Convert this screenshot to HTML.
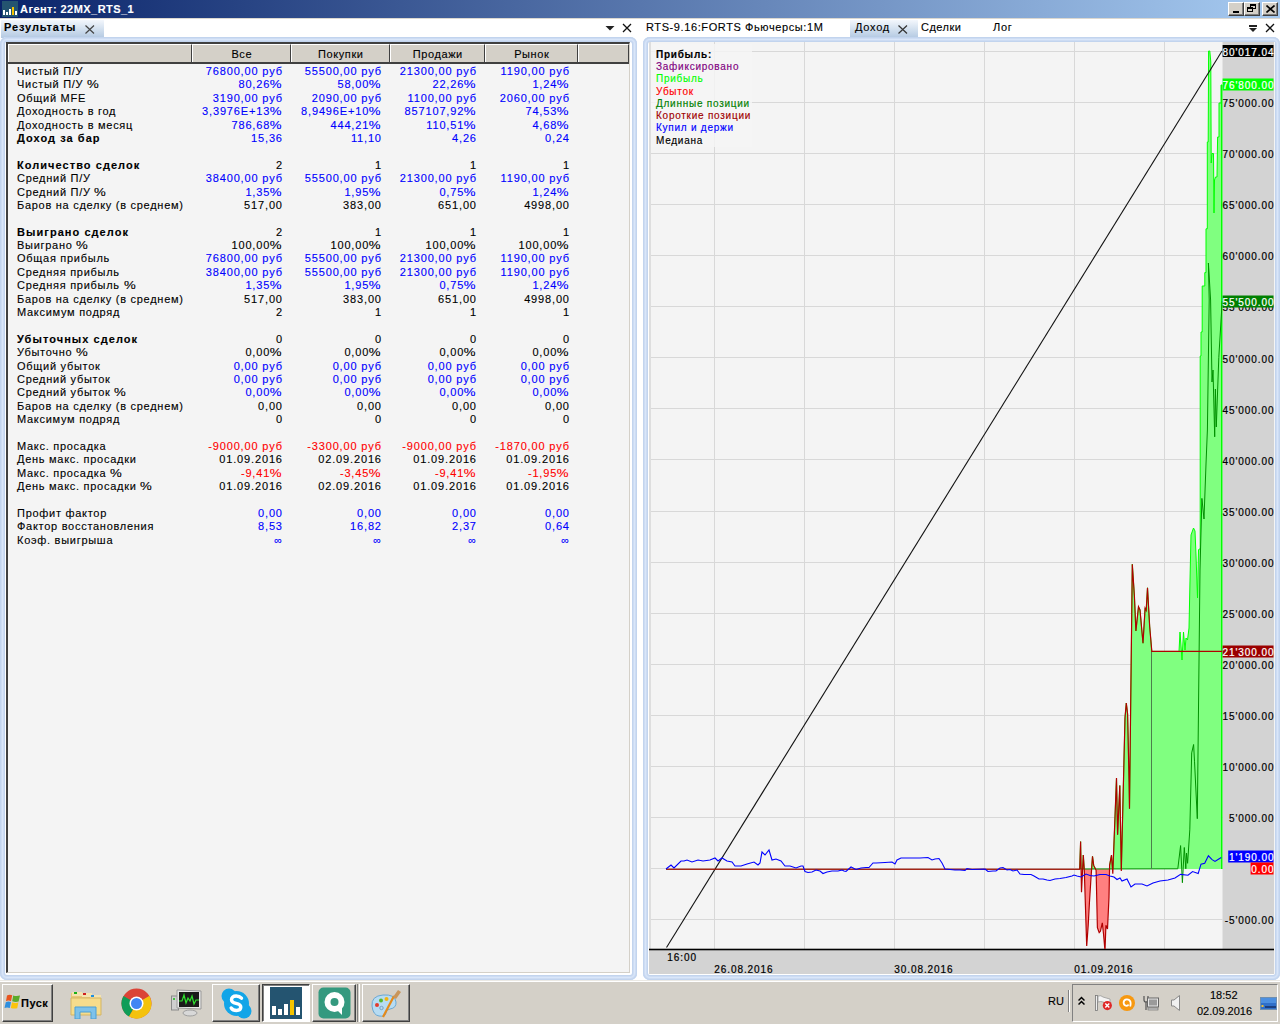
<!DOCTYPE html>
<html><head><meta charset="utf-8">
<style>
*{margin:0;padding:0;box-sizing:border-box}
html,body{width:1280px;height:1024px;overflow:hidden;background:#fff;font-family:"Liberation Sans",sans-serif;font-size:11px;color:#000;position:relative;-webkit-text-stroke:0.12px currentColor}
.a{position:absolute}
#title{left:0;top:0;width:1280px;height:18px;background:linear-gradient(to right,#0a246a 0%,#a6caf0 100%)}
#title .t{position:absolute;left:20px;top:2px;color:#fff;font-weight:bold;font-size:11px;line-height:14px;letter-spacing:0.45px}
.tb{position:absolute;top:2px;width:16px;height:14px;background:#d4d0c8;border-top:1px solid #fff;border-left:1px solid #fff;border-right:1px solid #404040;border-bottom:1px solid #404040;box-shadow:inset -1px -1px 0 #808080}
.tab{position:absolute;top:20px;height:18px;background:linear-gradient(#f3f7fc,#b3c9e2)}
.frame{position:absolute;border-radius:7px;background:#fff;box-shadow:inset 0 0 0 1px #c2d4ee,inset 0 0 0 2px #cddcf3,inset 0 0 0 3px #d9e6f9,inset 0 0 0 4px #cddcf3,inset 0 0 0 5px #c2d4ee}
.rl{position:absolute;left:17px;line-height:13px;white-space:nowrap;letter-spacing:0.72px}
.rl.b{letter-spacing:1.05px}
.rv{position:absolute;line-height:13px;white-space:nowrap;text-align:right;letter-spacing:0.85px;margin-right:-0.85px}
.b{font-weight:bold}
.pc{display:inline-block;margin-left:2px;transform:scaleX(1.2);transform-origin:100% 50%}
.hc{position:absolute;top:44px;height:19px;background:#d4d0c8;border-top:1px solid #fff;border-left:1px solid #fff;border-right:1px solid #404040;text-align:center;line-height:18px;letter-spacing:0.6px;text-indent:0.6px}
.tk{position:absolute;top:984px;height:38px;background:#d4d0c8;border-top:1px solid #fff;border-left:1px solid #fff;border-right:1px solid #404040;border-bottom:1px solid #404040;box-shadow:inset -1px -1px 0 #808080}
</style></head><body>
<div id="title" class="a">
  <svg class="a" style="left:2px;top:1px" width="16" height="16"><rect width="16" height="16" fill="#245470"/><rect x="1" y="9" width="2" height="5" fill="#fff"/><rect x="4" y="11" width="2" height="3" fill="#fff"/><rect x="7" y="8" width="2" height="6" fill="#fff"/><rect x="10" y="6" width="2" height="8" fill="#f5c400"/><rect x="13" y="10" width="2" height="4" fill="#fff"/></svg>
  <div class="t">Агент: 22MX_RTS_1</div>
  <div class="tb" style="left:1228px"><div class="a" style="left:4px;top:8px;width:6px;height:2px;background:#000"></div></div>
  <div class="tb" style="left:1244px"><div class="a" style="left:5px;top:1px;width:6px;height:5px;border:1px solid #000;border-top-width:2px"></div><div class="a" style="left:2px;top:4px;width:6px;height:5px;border:1px solid #000;border-top-width:2px;background:#d4d0c8"></div></div>
  <div class="tb" style="left:1262px"><svg class="a" style="left:3px;top:2px" width="9" height="8"><path d="M0.5 0.5 L8.5 7.5 M8.5 0.5 L0.5 7.5" stroke="#000" stroke-width="1.6"/></svg></div>
</div>
<div class="a" style="left:0;top:18px;width:1280px;height:1px;background:#dcd8d0"></div>
<!-- left panel tab strip -->
<div class="tab" style="left:1px;width:103px"></div>
<div class="a b" style="left:4px;top:21px;font-size:11px;line-height:13px;letter-spacing:0.9px">Результаты</div>
<svg class="a" style="left:85px;top:25px" width="10" height="9"><path d="M0.5 0.5 L9 8.5 M9 0.5 L0.5 8.5" stroke="#444" stroke-width="1.2"/></svg>
<svg class="a" style="left:605px;top:25px" width="10" height="7"><path d="M0.5 1 L9.5 1 L5 5.5 Z" fill="#222"/></svg>
<svg class="a" style="left:622px;top:23px" width="10" height="10"><path d="M1 1 L9 9 M9 1 L1 9" stroke="#111" stroke-width="1.3"/></svg>
<!-- right panel tabs -->
<div class="a" style="left:646px;top:21px;line-height:13px;letter-spacing:0.6px">RTS-9.16:FORTS Фьючерсы:1M</div>
<div class="tab" style="left:850px;width:68px"></div>
<div class="a" style="left:855px;top:21px;line-height:13px;letter-spacing:0.75px">Доход</div>
<svg class="a" style="left:898px;top:25px" width="10" height="9"><path d="M0.5 0.5 L9 8.5 M9 0.5 L0.5 8.5" stroke="#333" stroke-width="1.2"/></svg>
<div class="a" style="left:921px;top:21px;line-height:13px;letter-spacing:0.5px">Сделки</div>
<div class="a" style="left:993px;top:21px;line-height:13px;letter-spacing:0.7px">Лог</div>
<svg class="a" style="left:1248px;top:24px" width="10" height="10"><rect x="1" y="1" width="8" height="2" fill="#222"/><path d="M1 4 L9 4 L5 8 Z" fill="#222"/></svg>
<svg class="a" style="left:1265px;top:23px" width="10" height="10"><path d="M1 1 L9 9 M9 1 L1 9" stroke="#111" stroke-width="1.3"/></svg>

<!-- left frame -->
<div class="frame" style="left:0;top:37px;width:637px;height:943px"></div>
<div class="a" style="left:6px;top:42px;width:624px;height:931px;background:#f4f4f4;border-left:2px solid #404040;border-top:2px solid #404040;border-right:1px solid #d4d0c8;border-bottom:1px solid #d4d0c8"></div>
<div class="hc" style="left:8px;width:184px"></div>
<div class="hc" style="left:192px;width:99px">Все</div>
<div class="hc" style="left:291px;width:99px">Покупки</div>
<div class="hc" style="left:390px;width:95px">Продажи</div>
<div class="hc" style="left:485px;width:93px">Рынок</div>
<div class="hc" style="left:578px;width:51px"></div>
<div class="a" style="left:8px;top:62px;width:621px;height:2px;background:#404040"></div>
<div class="rl" style="top:65.00px">Чистый П/У</div>
<div class="rv" style="top:65.00px;right:998px;color:#0000ff">76800,00 руб</div>
<div class="rv" style="top:65.00px;right:899px;color:#0000ff">55500,00 руб</div>
<div class="rv" style="top:65.00px;right:804px;color:#0000ff">21300,00 руб</div>
<div class="rv" style="top:65.00px;right:711px;color:#0000ff">1190,00 руб</div>
<div class="rl" style="top:78.39px">Чистый П/У <span class="pc">%</span></div>
<div class="rv" style="top:78.39px;right:998px;color:#0000ff">80,26<span class="pc">%</span></div>
<div class="rv" style="top:78.39px;right:899px;color:#0000ff">58,00<span class="pc">%</span></div>
<div class="rv" style="top:78.39px;right:804px;color:#0000ff">22,26<span class="pc">%</span></div>
<div class="rv" style="top:78.39px;right:711px;color:#0000ff">1,24<span class="pc">%</span></div>
<div class="rl" style="top:91.78px">Общий MFE</div>
<div class="rv" style="top:91.78px;right:998px;color:#0000ff">3190,00 руб</div>
<div class="rv" style="top:91.78px;right:899px;color:#0000ff">2090,00 руб</div>
<div class="rv" style="top:91.78px;right:804px;color:#0000ff">1100,00 руб</div>
<div class="rv" style="top:91.78px;right:711px;color:#0000ff">2060,00 руб</div>
<div class="rl" style="top:105.17px">Доходность в год</div>
<div class="rv" style="top:105.17px;right:998px;color:#0000ff">3,3976E+13<span class="pc">%</span></div>
<div class="rv" style="top:105.17px;right:899px;color:#0000ff">8,9496E+10<span class="pc">%</span></div>
<div class="rv" style="top:105.17px;right:804px;color:#0000ff">857107,92<span class="pc">%</span></div>
<div class="rv" style="top:105.17px;right:711px;color:#0000ff">74,53<span class="pc">%</span></div>
<div class="rl" style="top:118.56px">Доходность в месяц</div>
<div class="rv" style="top:118.56px;right:998px;color:#0000ff">786,68<span class="pc">%</span></div>
<div class="rv" style="top:118.56px;right:899px;color:#0000ff">444,21<span class="pc">%</span></div>
<div class="rv" style="top:118.56px;right:804px;color:#0000ff">110,51<span class="pc">%</span></div>
<div class="rv" style="top:118.56px;right:711px;color:#0000ff">4,68<span class="pc">%</span></div>
<div class="rl b" style="top:131.95px">Доход за бар</div>
<div class="rv" style="top:131.95px;right:998px;color:#0000ff">15,36</div>
<div class="rv" style="top:131.95px;right:899px;color:#0000ff">11,10</div>
<div class="rv" style="top:131.95px;right:804px;color:#0000ff">4,26</div>
<div class="rv" style="top:131.95px;right:711px;color:#0000ff">0,24</div>
<div class="rl b" style="top:158.73px">Количество сделок</div>
<div class="rv" style="top:158.73px;right:998px;color:#000000">2</div>
<div class="rv" style="top:158.73px;right:899px;color:#000000">1</div>
<div class="rv" style="top:158.73px;right:804px;color:#000000">1</div>
<div class="rv" style="top:158.73px;right:711px;color:#000000">1</div>
<div class="rl" style="top:172.12px">Средний П/У</div>
<div class="rv" style="top:172.12px;right:998px;color:#0000ff">38400,00 руб</div>
<div class="rv" style="top:172.12px;right:899px;color:#0000ff">55500,00 руб</div>
<div class="rv" style="top:172.12px;right:804px;color:#0000ff">21300,00 руб</div>
<div class="rv" style="top:172.12px;right:711px;color:#0000ff">1190,00 руб</div>
<div class="rl" style="top:185.51px">Средний П/У <span class="pc">%</span></div>
<div class="rv" style="top:185.51px;right:998px;color:#0000ff">1,35<span class="pc">%</span></div>
<div class="rv" style="top:185.51px;right:899px;color:#0000ff">1,95<span class="pc">%</span></div>
<div class="rv" style="top:185.51px;right:804px;color:#0000ff">0,75<span class="pc">%</span></div>
<div class="rv" style="top:185.51px;right:711px;color:#0000ff">1,24<span class="pc">%</span></div>
<div class="rl" style="top:198.90px">Баров на сделку (в среднем)</div>
<div class="rv" style="top:198.90px;right:998px;color:#000000">517,00</div>
<div class="rv" style="top:198.90px;right:899px;color:#000000">383,00</div>
<div class="rv" style="top:198.90px;right:804px;color:#000000">651,00</div>
<div class="rv" style="top:198.90px;right:711px;color:#000000">4998,00</div>
<div class="rl b" style="top:225.68px">Выиграно сделок</div>
<div class="rv" style="top:225.68px;right:998px;color:#000000">2</div>
<div class="rv" style="top:225.68px;right:899px;color:#000000">1</div>
<div class="rv" style="top:225.68px;right:804px;color:#000000">1</div>
<div class="rv" style="top:225.68px;right:711px;color:#000000">1</div>
<div class="rl" style="top:239.07px">Выиграно <span class="pc">%</span></div>
<div class="rv" style="top:239.07px;right:998px;color:#000000">100,00<span class="pc">%</span></div>
<div class="rv" style="top:239.07px;right:899px;color:#000000">100,00<span class="pc">%</span></div>
<div class="rv" style="top:239.07px;right:804px;color:#000000">100,00<span class="pc">%</span></div>
<div class="rv" style="top:239.07px;right:711px;color:#000000">100,00<span class="pc">%</span></div>
<div class="rl" style="top:252.46px">Общая прибыль</div>
<div class="rv" style="top:252.46px;right:998px;color:#0000ff">76800,00 руб</div>
<div class="rv" style="top:252.46px;right:899px;color:#0000ff">55500,00 руб</div>
<div class="rv" style="top:252.46px;right:804px;color:#0000ff">21300,00 руб</div>
<div class="rv" style="top:252.46px;right:711px;color:#0000ff">1190,00 руб</div>
<div class="rl" style="top:265.85px">Средняя прибыль</div>
<div class="rv" style="top:265.85px;right:998px;color:#0000ff">38400,00 руб</div>
<div class="rv" style="top:265.85px;right:899px;color:#0000ff">55500,00 руб</div>
<div class="rv" style="top:265.85px;right:804px;color:#0000ff">21300,00 руб</div>
<div class="rv" style="top:265.85px;right:711px;color:#0000ff">1190,00 руб</div>
<div class="rl" style="top:279.24px">Средняя прибыль <span class="pc">%</span></div>
<div class="rv" style="top:279.24px;right:998px;color:#0000ff">1,35<span class="pc">%</span></div>
<div class="rv" style="top:279.24px;right:899px;color:#0000ff">1,95<span class="pc">%</span></div>
<div class="rv" style="top:279.24px;right:804px;color:#0000ff">0,75<span class="pc">%</span></div>
<div class="rv" style="top:279.24px;right:711px;color:#0000ff">1,24<span class="pc">%</span></div>
<div class="rl" style="top:292.63px">Баров на сделку (в среднем)</div>
<div class="rv" style="top:292.63px;right:998px;color:#000000">517,00</div>
<div class="rv" style="top:292.63px;right:899px;color:#000000">383,00</div>
<div class="rv" style="top:292.63px;right:804px;color:#000000">651,00</div>
<div class="rv" style="top:292.63px;right:711px;color:#000000">4998,00</div>
<div class="rl" style="top:306.02px">Максимум подряд</div>
<div class="rv" style="top:306.02px;right:998px;color:#000000">2</div>
<div class="rv" style="top:306.02px;right:899px;color:#000000">1</div>
<div class="rv" style="top:306.02px;right:804px;color:#000000">1</div>
<div class="rv" style="top:306.02px;right:711px;color:#000000">1</div>
<div class="rl b" style="top:332.80px">Убыточных сделок</div>
<div class="rv" style="top:332.80px;right:998px;color:#000000">0</div>
<div class="rv" style="top:332.80px;right:899px;color:#000000">0</div>
<div class="rv" style="top:332.80px;right:804px;color:#000000">0</div>
<div class="rv" style="top:332.80px;right:711px;color:#000000">0</div>
<div class="rl" style="top:346.19px">Убыточно <span class="pc">%</span></div>
<div class="rv" style="top:346.19px;right:998px;color:#000000">0,00<span class="pc">%</span></div>
<div class="rv" style="top:346.19px;right:899px;color:#000000">0,00<span class="pc">%</span></div>
<div class="rv" style="top:346.19px;right:804px;color:#000000">0,00<span class="pc">%</span></div>
<div class="rv" style="top:346.19px;right:711px;color:#000000">0,00<span class="pc">%</span></div>
<div class="rl" style="top:359.58px">Общий убыток</div>
<div class="rv" style="top:359.58px;right:998px;color:#0000ff">0,00 руб</div>
<div class="rv" style="top:359.58px;right:899px;color:#0000ff">0,00 руб</div>
<div class="rv" style="top:359.58px;right:804px;color:#0000ff">0,00 руб</div>
<div class="rv" style="top:359.58px;right:711px;color:#0000ff">0,00 руб</div>
<div class="rl" style="top:372.97px">Средний убыток</div>
<div class="rv" style="top:372.97px;right:998px;color:#0000ff">0,00 руб</div>
<div class="rv" style="top:372.97px;right:899px;color:#0000ff">0,00 руб</div>
<div class="rv" style="top:372.97px;right:804px;color:#0000ff">0,00 руб</div>
<div class="rv" style="top:372.97px;right:711px;color:#0000ff">0,00 руб</div>
<div class="rl" style="top:386.36px">Средний убыток <span class="pc">%</span></div>
<div class="rv" style="top:386.36px;right:998px;color:#0000ff">0,00<span class="pc">%</span></div>
<div class="rv" style="top:386.36px;right:899px;color:#0000ff">0,00<span class="pc">%</span></div>
<div class="rv" style="top:386.36px;right:804px;color:#0000ff">0,00<span class="pc">%</span></div>
<div class="rv" style="top:386.36px;right:711px;color:#0000ff">0,00<span class="pc">%</span></div>
<div class="rl" style="top:399.75px">Баров на сделку (в среднем)</div>
<div class="rv" style="top:399.75px;right:998px;color:#000000">0,00</div>
<div class="rv" style="top:399.75px;right:899px;color:#000000">0,00</div>
<div class="rv" style="top:399.75px;right:804px;color:#000000">0,00</div>
<div class="rv" style="top:399.75px;right:711px;color:#000000">0,00</div>
<div class="rl" style="top:413.14px">Максимум подряд</div>
<div class="rv" style="top:413.14px;right:998px;color:#000000">0</div>
<div class="rv" style="top:413.14px;right:899px;color:#000000">0</div>
<div class="rv" style="top:413.14px;right:804px;color:#000000">0</div>
<div class="rv" style="top:413.14px;right:711px;color:#000000">0</div>
<div class="rl" style="top:439.92px">Макс. просадка</div>
<div class="rv" style="top:439.92px;right:998px;color:#ff0000">-9000,00 руб</div>
<div class="rv" style="top:439.92px;right:899px;color:#ff0000">-3300,00 руб</div>
<div class="rv" style="top:439.92px;right:804px;color:#ff0000">-9000,00 руб</div>
<div class="rv" style="top:439.92px;right:711px;color:#ff0000">-1870,00 руб</div>
<div class="rl" style="top:453.31px">День макс. просадки</div>
<div class="rv" style="top:453.31px;right:998px;color:#000000">01.09.2016</div>
<div class="rv" style="top:453.31px;right:899px;color:#000000">02.09.2016</div>
<div class="rv" style="top:453.31px;right:804px;color:#000000">01.09.2016</div>
<div class="rv" style="top:453.31px;right:711px;color:#000000">01.09.2016</div>
<div class="rl" style="top:466.70px">Макс. просадка <span class="pc">%</span></div>
<div class="rv" style="top:466.70px;right:998px;color:#ff0000">-9,41<span class="pc">%</span></div>
<div class="rv" style="top:466.70px;right:899px;color:#ff0000">-3,45<span class="pc">%</span></div>
<div class="rv" style="top:466.70px;right:804px;color:#ff0000">-9,41<span class="pc">%</span></div>
<div class="rv" style="top:466.70px;right:711px;color:#ff0000">-1,95<span class="pc">%</span></div>
<div class="rl" style="top:480.09px">День макс. просадки <span class="pc">%</span></div>
<div class="rv" style="top:480.09px;right:998px;color:#000000">01.09.2016</div>
<div class="rv" style="top:480.09px;right:899px;color:#000000">02.09.2016</div>
<div class="rv" style="top:480.09px;right:804px;color:#000000">01.09.2016</div>
<div class="rv" style="top:480.09px;right:711px;color:#000000">01.09.2016</div>
<div class="rl" style="top:506.87px">Профит фактор</div>
<div class="rv" style="top:506.87px;right:998px;color:#0000ff">0,00</div>
<div class="rv" style="top:506.87px;right:899px;color:#0000ff">0,00</div>
<div class="rv" style="top:506.87px;right:804px;color:#0000ff">0,00</div>
<div class="rv" style="top:506.87px;right:711px;color:#0000ff">0,00</div>
<div class="rl" style="top:520.26px">Фактор восстановления</div>
<div class="rv" style="top:520.26px;right:998px;color:#0000ff">8,53</div>
<div class="rv" style="top:520.26px;right:899px;color:#0000ff">16,82</div>
<div class="rv" style="top:520.26px;right:804px;color:#0000ff">2,37</div>
<div class="rv" style="top:520.26px;right:711px;color:#0000ff">0,64</div>
<div class="rl" style="top:533.65px">Коэф. выигрыша</div>
<div class="rv" style="top:533.65px;right:998px;color:#0000ff">∞</div>
<div class="rv" style="top:533.65px;right:899px;color:#0000ff">∞</div>
<div class="rv" style="top:533.65px;right:804px;color:#0000ff">∞</div>
<div class="rv" style="top:533.65px;right:711px;color:#0000ff">∞</div>

<!-- right frame -->
<div class="frame" style="left:643px;top:37px;width:637px;height:943px"></div>
<svg class="a" style="left:649px;top:42px" width="626" height="932" viewBox="649 42 626 932">
<defs><clipPath id="plot"><rect x="649" y="42" width="573.5" height="907"/></clipPath><clipPath id="below"><rect x="649" y="869" width="573.5" height="80"/></clipPath><clipPath id="above"><rect x="649" y="42" width="573.5" height="827"/></clipPath></defs>
<rect x="649" y="42" width="626" height="932" fill="#f4f4f4"/>
<rect x="649" y="42" width="2" height="907" fill="#dedede"/>
<rect x="714" y="42" width="1" height="907" fill="#d8d8d8"/>
<rect x="804" y="42" width="1" height="907" fill="#d8d8d8"/>
<rect x="894" y="42" width="1" height="907" fill="#d8d8d8"/>
<rect x="984" y="42" width="1" height="907" fill="#d8d8d8"/>
<rect x="1074" y="42" width="1" height="907" fill="#d8d8d8"/>
<rect x="1164" y="42" width="1" height="907" fill="#d8d8d8"/>
<rect x="651" y="919" width="571.5" height="1" fill="#d8d8d8"/>
<rect x="651" y="868" width="571.5" height="1" fill="#d8d8d8"/>
<rect x="651" y="817" width="571.5" height="1" fill="#d8d8d8"/>
<rect x="651" y="766" width="571.5" height="1" fill="#d8d8d8"/>
<rect x="651" y="715" width="571.5" height="1" fill="#d8d8d8"/>
<rect x="651" y="664" width="571.5" height="1" fill="#d8d8d8"/>
<rect x="651" y="613" width="571.5" height="1" fill="#d8d8d8"/>
<rect x="651" y="562" width="571.5" height="1" fill="#d8d8d8"/>
<rect x="651" y="511" width="571.5" height="1" fill="#d8d8d8"/>
<rect x="651" y="459" width="571.5" height="1" fill="#d8d8d8"/>
<rect x="651" y="408" width="571.5" height="1" fill="#d8d8d8"/>
<rect x="651" y="357" width="571.5" height="1" fill="#d8d8d8"/>
<rect x="651" y="306" width="571.5" height="1" fill="#d8d8d8"/>
<rect x="651" y="255" width="571.5" height="1" fill="#d8d8d8"/>
<rect x="651" y="204" width="571.5" height="1" fill="#d8d8d8"/>
<rect x="651" y="153" width="571.5" height="1" fill="#d8d8d8"/>
<rect x="651" y="102" width="571.5" height="1" fill="#d8d8d8"/>
<rect x="651" y="51" width="571.5" height="1" fill="#d8d8d8"/>
<rect x="1222.5" y="42" width="51.5" height="907" fill="#d3d3d3"/>
<rect x="649" y="949" width="625" height="25" fill="#d3d3d3"/>
<rect x="649" y="948.7" width="625" height="1.6" fill="#000"/>
<g clip-path="url(#plot)">
<polygon clip-path="url(#below)" points="1079.7,869 1080.6,841.6 1081.5,892.3 1083.3,855 1084.3,870.3 1086.7,946 1088.2,925.2 1089.4,903.3 1090.7,882.5 1092.5,856.3 1093.7,865.4 1095,868 1096.1,870.3 1097.4,927.7 1099.2,932.6 1100.4,931.3 1102.3,922.8 1103.5,933.8 1105,950.9 1105.9,925.2 1107.5,928.9 1109,897.2 1109.6,865.4 1111.5,855 1112.8,873.7 1116.5,778 1117.6,834.7 1119.8,785.5 1121.3,871 1125,717.8 1126.3,703 1127.6,714 1129.1,782.8 1129.5,808.7 1132.3,564.2 1134.4,596 1135.9,630.9 1138.5,606.8 1140,610 1143,643.2 1145.1,608.3 1146.2,610.4 1147.5,587.8 1149.7,626.8 1151.8,651.4 1222,651.4 1222,869 1079.5,869" fill="#ff8080"/>
<polygon clip-path="url(#above)" points="1079.7,869 1080.6,841.6 1081.5,892.3 1083.3,855 1084.3,870.3 1086.7,946 1088.2,925.2 1089.4,903.3 1090.7,882.5 1092.5,856.3 1093.7,865.4 1095,868 1096.1,870.3 1097.4,927.7 1099.2,932.6 1100.4,931.3 1102.3,922.8 1103.5,933.8 1105,950.9 1105.9,925.2 1107.5,928.9 1109,897.2 1109.6,865.4 1111.5,855 1112.8,873.7 1116.5,778 1117.6,834.7 1119.8,785.5 1121.3,871 1125,717.8 1126.3,703 1127.6,714 1129.1,782.8 1129.5,808.7 1132.3,564.2 1134.4,596 1135.9,630.9 1138.5,606.8 1140,610 1143,643.2 1145.1,608.3 1146.2,610.4 1147.5,587.8 1149.7,626.8 1151.8,651.4 1179,651.4 1180,632 1182,660 1183.5,632 1185,650 1186,638 1187.5,640 1189,628 1190,580 1191,535 1193.5,528 1195,531 1196,555 1197.5,598 1198.5,550 1199.2,549 1200.2,549 1200.2,356 1201,356 1201,332 1202.2,332 1202.2,286 1204.8,286 1204.8,272.6 1206,272.6 1206,228.8 1207.3,228.8 1207.3,142 1208.2,142 1208.6,51 1209.8,51 1210.8,62 1211.2,163 1212,153.5 1213.5,153.5 1214,213 1214.5,180 1215.5,177 1217,177 1217.6,137 1219,137 1219,103 1221,103 1221,85 1222,85 1222,869 1079.5,869" fill="#80ff80"/>
<polyline clip-path="url(#above)" points="1079.7,869 1080.6,841.6 1081.5,892.3 1083.3,855 1084.3,870.3 1086.7,946 1088.2,925.2 1089.4,903.3 1090.7,882.5 1092.5,856.3 1093.7,865.4 1095,868 1096.1,870.3 1097.4,927.7 1099.2,932.6 1100.4,931.3 1102.3,922.8 1103.5,933.8 1105,950.9 1105.9,925.2 1107.5,928.9 1109,897.2 1109.6,865.4 1111.5,855 1112.8,873.7 1116.5,778 1117.6,834.7 1119.8,785.5 1121.3,871 1125,717.8 1126.3,703 1127.6,714 1129.1,782.8 1129.5,808.7 1132.3,564.2 1134.4,596 1135.9,630.9 1138.5,606.8 1140,610 1143,643.2 1145.1,608.3 1146.2,610.4 1147.5,587.8 1149.7,626.8 1151.8,651.4 1179,651.4 1180,632 1182,660 1183.5,632 1185,650 1186,638 1187.5,640 1189,628 1190,580 1191,535 1193.5,528 1195,531 1196,555 1197.5,598 1198.5,550 1199.2,549 1200.2,549 1200.2,356 1201,356 1201,332 1202.2,332 1202.2,286 1204.8,286 1204.8,272.6 1206,272.6 1206,228.8 1207.3,228.8 1207.3,142 1208.2,142 1208.6,51 1209.8,51 1210.8,62 1211.2,163 1212,153.5 1213.5,153.5 1214,213 1214.5,180 1215.5,177 1217,177 1217.6,137 1219,137 1219,103 1221,103 1221,85 1222,85" fill="none" stroke="#00ff00" stroke-width="1"/>
<rect x="1221" y="85" width="2" height="784" fill="#00ff00"/>
<line x1="666.5" y1="947.5" x2="1222" y2="51" stroke="#111" stroke-width="1.1"/>
<polyline points="1080,869 1177.8,868.8 1180.6,845.6 1182.4,882.7 1184.3,847.5 1185.8,868.8 1186.5,853 1187.6,863.3 1189.8,829.9 1191.7,752.9 1193.6,744.5 1194.5,761.2 1197.3,818.7 1200,570 1201.9,498.4 1204,519 1206,464 1207.4,430 1209.2,300 1208.4,263 1210.6,300 1212,382 1213,370 1214.7,436.8 1215.4,389 1216.3,427 1218.8,357.5 1222.2,301" fill="none" stroke="#009000" stroke-width="1"/>
<rect x="1151" y="651" width="1" height="218" fill="#4c7f4c"/>
<rect x="666" y="868.6" width="414" height="1.3" fill="#9b1000"/>
<polyline points="1079.7,869 1080.6,841.6 1081.5,892.3 1083.3,855 1084.3,870.3 1086.7,946 1088.2,925.2 1089.4,903.3 1090.7,882.5 1092.5,856.3 1093.7,865.4 1095,868 1096.1,870.3 1097.4,927.7 1099.2,932.6 1100.4,931.3 1102.3,922.8 1103.5,933.8 1105,950.9 1105.9,925.2 1107.5,928.9 1109,897.2 1109.6,865.4 1111.5,855 1112.8,873.7 1116.5,778 1117.6,834.7 1119.8,785.5 1121.3,871 1125,717.8 1126.3,703 1127.6,714 1129.1,782.8 1129.5,808.7 1132.3,564.2 1134.4,596 1135.9,630.9 1138.5,606.8 1140,610 1143,643.2 1145.1,608.3 1146.2,610.4 1147.5,587.8 1149.7,626.8 1151.8,651.4 1222,651.4" fill="none" stroke="#b00000" stroke-width="1.2"/>
<polyline points="666,869 671,865 674,868 681,861 684,861 687,860 692,862 698,860 703,861 710,860 715,858 718,861 722,858 727,861 732,862 735,866 741,866 747,864 754,862 758,865 760,863 762,852 765,855 769,850 772,860 776,859 781,861 785,866 790,866 796,868 801,866 803,866 805,871.5 808,872.5 812,872 816,870 820,871 823,873.5 827,872 832,871 838,871 842,870 844,871 846,871.5 851,867 856,869.5 861,868 866,867.5 869,867.5 873,863 876,863 885,862.5 892,862 895,864 897,860 901,858 908,858 915,858 920,858 928,857.5 932,860 935,859 939,858.5 942,863 945,869 950,869.5 955,870 960,870 965,870.5 967,868.5 972,869.5 985,869 988,871.5 993,871 996,871 1000,868 1003,867.5 1007,870 1010,869.5 1013,871 1017,870 1020,874 1024,874.5 1031,874.5 1034,876 1039,879 1043,879 1047,880 1050,880.5 1055,879 1060,878.5 1066,877.5 1072,876 1074,875 1077,876 1081,877 1086,874 1090,875.5 1094,876 1100,874.5 1106,874.5 1110,876 1114,877 1117,879.5 1120,878 1122,881 1127,879 1131,887 1135,884 1142,884 1147,886 1153,883 1160,881 1168,880 1175,878 1180.6,874.4 1188,875.3 1192.6,871.6 1198.2,873.5 1201,864.2 1204.7,863.3 1208.4,855.8 1212.1,859.6 1215,861.4 1218,859.5 1221.3,857.5" fill="none" stroke="#0000ff" stroke-width="1.1"/>
</g>
<text x="1274.6" y="924.3" text-anchor="end" style="font-family:Liberation Sans;font-size:10px;letter-spacing:0.95px" fill="#000" stroke="#000" stroke-width="0.2">-5'000.00</text>
<text x="1274.6" y="873.2" text-anchor="end" style="font-family:Liberation Sans;font-size:10px;letter-spacing:0.95px" fill="#000" stroke="#000" stroke-width="0.2">0.00</text>
<text x="1274.6" y="822.1" text-anchor="end" style="font-family:Liberation Sans;font-size:10px;letter-spacing:0.95px" fill="#000" stroke="#000" stroke-width="0.2">5'000.00</text>
<text x="1274.6" y="771.1" text-anchor="end" style="font-family:Liberation Sans;font-size:10px;letter-spacing:0.95px" fill="#000" stroke="#000" stroke-width="0.2">10'000.00</text>
<text x="1274.6" y="720.0" text-anchor="end" style="font-family:Liberation Sans;font-size:10px;letter-spacing:0.95px" fill="#000" stroke="#000" stroke-width="0.2">15'000.00</text>
<text x="1274.6" y="668.9" text-anchor="end" style="font-family:Liberation Sans;font-size:10px;letter-spacing:0.95px" fill="#000" stroke="#000" stroke-width="0.2">20'000.00</text>
<text x="1274.6" y="617.9" text-anchor="end" style="font-family:Liberation Sans;font-size:10px;letter-spacing:0.95px" fill="#000" stroke="#000" stroke-width="0.2">25'000.00</text>
<text x="1274.6" y="566.8" text-anchor="end" style="font-family:Liberation Sans;font-size:10px;letter-spacing:0.95px" fill="#000" stroke="#000" stroke-width="0.2">30'000.00</text>
<text x="1274.6" y="515.7" text-anchor="end" style="font-family:Liberation Sans;font-size:10px;letter-spacing:0.95px" fill="#000" stroke="#000" stroke-width="0.2">35'000.00</text>
<text x="1274.6" y="464.6" text-anchor="end" style="font-family:Liberation Sans;font-size:10px;letter-spacing:0.95px" fill="#000" stroke="#000" stroke-width="0.2">40'000.00</text>
<text x="1274.6" y="413.6" text-anchor="end" style="font-family:Liberation Sans;font-size:10px;letter-spacing:0.95px" fill="#000" stroke="#000" stroke-width="0.2">45'000.00</text>
<text x="1274.6" y="362.5" text-anchor="end" style="font-family:Liberation Sans;font-size:10px;letter-spacing:0.95px" fill="#000" stroke="#000" stroke-width="0.2">50'000.00</text>
<text x="1274.6" y="311.4" text-anchor="end" style="font-family:Liberation Sans;font-size:10px;letter-spacing:0.95px" fill="#000" stroke="#000" stroke-width="0.2">55'000.00</text>
<text x="1274.6" y="260.4" text-anchor="end" style="font-family:Liberation Sans;font-size:10px;letter-spacing:0.95px" fill="#000" stroke="#000" stroke-width="0.2">60'000.00</text>
<text x="1274.6" y="209.3" text-anchor="end" style="font-family:Liberation Sans;font-size:10px;letter-spacing:0.95px" fill="#000" stroke="#000" stroke-width="0.2">65'000.00</text>
<text x="1274.6" y="158.2" text-anchor="end" style="font-family:Liberation Sans;font-size:10px;letter-spacing:0.95px" fill="#000" stroke="#000" stroke-width="0.2">70'000.00</text>
<text x="1274.6" y="107.2" text-anchor="end" style="font-family:Liberation Sans;font-size:10px;letter-spacing:0.95px" fill="#000" stroke="#000" stroke-width="0.2">75'000.00</text>
<rect x="1222.6" y="45.0" width="50.9" height="12" fill="#000000"/>
<text x="1274.6" y="55.7" text-anchor="end" style="font-family:Liberation Sans;font-size:10px;letter-spacing:0.95px" fill="#fff" stroke="#fff" stroke-width="0.2">80'017.04</text>
<rect x="1222.6" y="78.5" width="50.9" height="12" fill="#00ff00"/>
<text x="1274.6" y="89.2" text-anchor="end" style="font-family:Liberation Sans;font-size:10px;letter-spacing:0.95px" fill="#fff" stroke="#fff" stroke-width="0.2">76'800.00</text>
<rect x="1222.6" y="295.5" width="50.9" height="12" fill="#008000"/>
<text x="1274.6" y="306.2" text-anchor="end" style="font-family:Liberation Sans;font-size:10px;letter-spacing:0.95px" fill="#fff" stroke="#fff" stroke-width="0.2">55'500.00</text>
<rect x="1222.6" y="645.5" width="50.9" height="12" fill="#9b0000"/>
<text x="1274.6" y="656.2" text-anchor="end" style="font-family:Liberation Sans;font-size:10px;letter-spacing:0.95px" fill="#fff" stroke="#fff" stroke-width="0.2">21'300.00</text>
<rect x="1228.2" y="850.5" width="45.3" height="12" fill="#0000ff"/>
<text x="1274.6" y="861.2" text-anchor="end" style="font-family:Liberation Sans;font-size:10px;letter-spacing:0.95px" fill="#fff" stroke="#fff" stroke-width="0.2">1'190.00</text>
<rect x="1250.6" y="862.5" width="22.9" height="12" fill="#ff0000"/>
<text x="1274.6" y="873.2" text-anchor="end" style="font-family:Liberation Sans;font-size:10px;letter-spacing:0.95px" fill="#fff" stroke="#fff" stroke-width="0.2">0.00</text>
<text x="667.3" y="960.8" style="font-family:Liberation Sans;font-size:10px;letter-spacing:0.92px" fill="#000" stroke="#000" stroke-width="0.2">16:00</text>
<text x="714.3" y="972.8" style="font-family:Liberation Sans;font-size:10px;letter-spacing:0.92px" fill="#000" stroke="#000" stroke-width="0.2">26.08.2016</text>
<text x="894.3" y="972.8" style="font-family:Liberation Sans;font-size:10px;letter-spacing:0.92px" fill="#000" stroke="#000" stroke-width="0.2">30.08.2016</text>
<text x="1074.3" y="972.8" style="font-family:Liberation Sans;font-size:10px;letter-spacing:0.92px" fill="#000" stroke="#000" stroke-width="0.2">01.09.2016</text>
<rect x="651" y="44" width="101" height="103" fill="#f4f4f4" fill-opacity="0.85"/>
<text x="656" y="57.6" style="font-family:Liberation Sans;font-size:10px;letter-spacing:0.75px;font-weight:bold" fill="#000" stroke="#000" stroke-width="0.15">Прибыль:</text>
<text x="656" y="69.9" style="font-family:Liberation Sans;font-size:10px;letter-spacing:0.75px" fill="#800080" stroke="#800080" stroke-width="0.15">Зафиксировано</text>
<text x="656" y="82.2" style="font-family:Liberation Sans;font-size:10px;letter-spacing:0.75px" fill="#00ff00" stroke="#00ff00" stroke-width="0.15">Прибыль</text>
<text x="656" y="94.5" style="font-family:Liberation Sans;font-size:10px;letter-spacing:0.75px" fill="#ff0000" stroke="#ff0000" stroke-width="0.15">Убыток</text>
<text x="656" y="106.8" style="font-family:Liberation Sans;font-size:10px;letter-spacing:0.75px" fill="#008000" stroke="#008000" stroke-width="0.15">Длинные позиции</text>
<text x="656" y="119.1" style="font-family:Liberation Sans;font-size:10px;letter-spacing:0.75px" fill="#a00000" stroke="#a00000" stroke-width="0.15">Короткие позиции</text>
<text x="656" y="131.4" style="font-family:Liberation Sans;font-size:10px;letter-spacing:0.75px" fill="#0000ff" stroke="#0000ff" stroke-width="0.15">Купил и держи</text>
<text x="656" y="143.7" style="font-family:Liberation Sans;font-size:10px;letter-spacing:0.75px" fill="#000" stroke="#000" stroke-width="0.15">Медиана</text>
</svg>

<!-- taskbar -->
<div class="a" style="left:0;top:980px;width:1280px;height:44px;background:#d4d0c8"></div>
<div class="a" style="left:0;top:980px;width:1280px;height:1px;background:#ebe9e4"></div>
<div class="a" style="left:0;top:981px;width:1280px;height:1px;background:#fff"></div>
<div class="tk" style="left:2px;width:51px"></div>
<svg class="a" style="left:4px;top:994px" width="17" height="15" viewBox="0 0 17 15">
<path d="M3 1.5 Q5.5 0 8.2 1.2 L7 7.2 Q4.5 6 2 7.2 Z" fill="#e8541e"/>
<path d="M9.2 1.4 Q12 2.6 16 1.6 L14.6 7.6 Q11.5 8.4 8.2 7.3 Z" fill="#5cab2a"/>
<path d="M1.8 8.2 Q4.5 7 7 8.2 L5.8 14 Q3 12.8 0.5 14 Z" fill="#2f8fde"/>
<path d="M8 8.3 Q11.2 9.4 14.4 8.6 L13.2 14.3 Q10 15 6.8 14 Z" fill="#fcc40c"/>
</svg>
<div class="a b" style="left:21px;top:997px;font-size:11px;line-height:12px;letter-spacing:0.5px">Пуск</div>
<svg class="a" style="left:70px;top:990px" width="32" height="29" viewBox="0 0 32 29">
<path d="M1 3 L1 25 L31 25 L31 6 L17 6 L15 3 Z" fill="#e9c77a"/>
<rect x="2" y="2" width="10" height="4" fill="#f4e3b0"/><rect x="4" y="2" width="3" height="2" fill="#18b018"/>
<rect x="12" y="3" width="10" height="4" fill="#f4e3b0"/><rect x="13" y="3" width="3" height="2" fill="#d02020"/>
<rect x="20" y="5" width="11" height="4" fill="#f4e3b0"/><rect x="21" y="5" width="3" height="2" fill="#2090e0"/>
<path d="M1 8 L31 8 L31 25 L1 25 Z" fill="#f6dc8c" stroke="#d3b565" stroke-width="1"/>
<path d="M5 17 L26 17 L26 29 L21 29 L21 22 L10 22 L10 29 L5 29 Z" fill="#7ec2ea" stroke="#4a9fd6" stroke-width="1"/>
</svg>
<svg class="a" style="left:121px;top:988px" width="31" height="31" viewBox="0 0 31 31">
<circle cx="15.5" cy="15.5" r="15" fill="#db4437"/>
<path d="M15.5 15.5 L2.5 8 A15 15 0 0 0 8 28.5 Z" fill="#0f9d58"/>
<path d="M15.5 15.5 L8 28.5 A15 15 0 0 0 30.5 15.5 L28.5 8 Z" fill="#f4c20d"/>
<path d="M15.5 15.5 L28.5 8 L30.5 15.5 Z" fill="#f4c20d"/>
<circle cx="15.5" cy="15.5" r="7" fill="#fff"/>
<circle cx="15.5" cy="15.5" r="5.5" fill="#4285f4"/>
</svg>
<svg class="a" style="left:171px;top:989px" width="31" height="28" viewBox="0 0 31 28">
<rect x="0.5" y="7" width="7" height="14" fill="#cfcfcf" stroke="#8a8a8a"/>
<rect x="2" y="9" width="2" height="2" fill="#40c040"/>
<path d="M6 1 L30 2 L30 20 L6 19 Z" fill="#e8e8e8" stroke="#9a9a9a"/>
<rect x="8" y="3" width="20" height="15" fill="#1a1a1a"/>
<path d="M8 12 L11 12 L13 6 L15 14 L17 9 L19 12 L21 7 L23 15 L25 11 L28 11" fill="none" stroke="#2ee02e" stroke-width="1.2"/>
<ellipse cx="19" cy="24" rx="7" ry="3" fill="#d8d8d8" stroke="#a0a0a0"/>
</svg>
<div class="tk" style="left:212px;width:48px"></div>
<svg class="a" style="left:221px;top:988px" width="31" height="31" viewBox="0 0 31 31">
<circle cx="8" cy="8" r="7.5" fill="#12a5e8"/><circle cx="23" cy="23" r="7.5" fill="#12a5e8"/>
<circle cx="15.5" cy="15.5" r="12.5" fill="#12a5e8"/>
<path d="M20.5 10.2 Q18.5 8 15.2 8 Q10.5 8 10.5 11.8 Q10.5 14.5 15 15.4 Q19.8 16.4 19.8 19 Q19.8 22.5 15.5 22.5 Q11.8 22.5 10.2 20" fill="none" stroke="#fff" stroke-width="3.4" stroke-linecap="round"/>
</svg>
<div class="a" style="left:262px;top:984px;width:48px;height:38px;background:#fff;border-top:1px solid #404040;border-left:1px solid #404040;border-right:1px solid #fff;border-bottom:1px solid #fff;box-shadow:inset 1px 1px 0 #808080"></div>
<svg class="a" style="left:270px;top:987px" width="32" height="32" viewBox="0 0 32 32">
<rect width="32" height="32" fill="#245470"/>
<rect x="2" y="19" width="4" height="9" fill="#fff"/><rect x="8" y="22" width="4" height="6" fill="#fff"/>
<rect x="14" y="17" width="4" height="11" fill="#fff"/><rect x="20" y="13" width="4" height="15" fill="#f5c400"/>
<rect x="26" y="20" width="4" height="8" fill="#fff"/>
</svg>
<div class="tk" style="left:312px;width:44px"></div>
<svg class="a" style="left:318px;top:987px" width="33" height="32" viewBox="0 0 33 32">
<rect x="0.5" y="0.5" width="32" height="31" rx="5" fill="#34997f"/>
<circle cx="16.5" cy="15" r="10" fill="#fff"/><circle cx="16.5" cy="15" r="4" fill="#34997f"/>
<path d="M18 22 L24 28 L24 20 Z" fill="#fff"/>
</svg>
<div class="a" style="left:357px;top:984px;width:3px;height:38px;border-left:1px solid #808080;border-right:1px solid #fff"></div>
<div class="tk" style="left:362px;width:48px"></div>
<svg class="a" style="left:369px;top:988px" width="33" height="31" viewBox="0 0 33 31">
<path d="M3 18 Q2 8 14 7 Q26 6 27 14 Q27.5 20 21 21 Q17 21.5 17 25 Q16.5 29 10 28 Q4 27 3 18 Z" fill="#b7dcf3" stroke="#6aa8d4"/>
<circle cx="8" cy="17" r="2" fill="#e23b2e"/><circle cx="12" cy="12.5" r="2" fill="#58b82f"/><circle cx="17.5" cy="11" r="2" fill="#f2b40f"/>
<circle cx="12.5" cy="20" r="1.7" fill="none" stroke="#7aa0c0"/>
<path d="M14 29 L25 8" stroke="#e58a1a" stroke-width="2.2"/>
<path d="M24 9 L29 2 L32 4 L27 11 Z" fill="#c9955a"/>
</svg>
<div class="a" style="left:1048px;top:995px;line-height:12px">RU</div>
<div class="a" style="left:1068px;top:990px;width:2px;height:22px;border-left:1px solid #808080;border-right:1px solid #fff"></div>
<div class="a" style="left:1072px;top:984px;width:206px;height:38px;border-top:1px solid #808080;border-left:1px solid #808080;border-right:1px solid #fff;border-bottom:1px solid #fff"></div>
<svg class="a" style="left:1078px;top:996px" width="7" height="10" viewBox="0 0 7 10"><path d="M0.5 4.5 L3.5 1.5 L6.5 4.5 M0.5 8.5 L3.5 5.5 L6.5 8.5" fill="none" stroke="#000" stroke-width="1.5"/></svg>
<svg class="a" style="left:1095px;top:995px" width="17" height="16" viewBox="0 0 17 16">
<rect x="0.5" y="0.5" width="2" height="15" fill="#eee" stroke="#777" stroke-width="0.8"/>
<path d="M3 1 Q6 0 8 2 Q11 3 15 4 L15 9 Q11 8 8 7 Q6 6 3 7 Z" fill="#f4f4f4" stroke="#999" stroke-width="0.8"/>
<circle cx="12.3" cy="10.6" r="4.6" fill="#e02828"/>
<path d="M10.3 8.6 L14.3 12.6 M14.3 8.6 L10.3 12.6" stroke="#fff" stroke-width="1.4"/>
</svg>
<svg class="a" style="left:1119px;top:995px" width="16" height="16" viewBox="0 0 16 16">
<circle cx="8" cy="8" r="8" fill="#f7980f"/>
<path d="M11.2 11.5 Q12 9 11.5 7 Q10.5 4.2 7.8 4.3 Q4.6 4.5 4.6 7.8 Q4.7 10.6 7.5 10.8 Q9 10.8 9.5 9.5" fill="none" stroke="#fff" stroke-width="1.8"/>
</svg>
<svg class="a" style="left:1143px;top:995px" width="16" height="16" viewBox="0 0 16 16">
<path d="M1 1 L1 5 Q1 7 3 7 L3 15 M5 1 L5 5 Q5 7 3 7" fill="none" stroke="#555" stroke-width="1.2"/>
<rect x="4.5" y="3" width="11" height="9" fill="#e8e8e8" stroke="#666"/>
<rect x="6" y="4.5" width="8" height="6" fill="#9a9a9a"/>
<rect x="5" y="13" width="10" height="2" fill="#ccc" stroke="#666" stroke-width="0.6"/>
</svg>
<svg class="a" style="left:1171px;top:995px" width="9" height="16" viewBox="0 0 9 16">
<path d="M0.5 5 L3 5 L8.5 0.5 L8.5 15.5 L3 11 L0.5 11 Z" fill="#f0f0f0" stroke="#888"/>
</svg>
<div class="a" style="left:1210px;top:989px;line-height:12px">18:52</div>
<div class="a" style="left:1197px;top:1005px;line-height:12px">02.09.2016</div>
<svg class="a" style="left:1260px;top:997px" width="17" height="13" viewBox="0 0 17 13">
<rect x="0.5" y="0.5" width="16" height="12" fill="#2f6fc9" stroke="#6f8fb0"/>
<rect x="1" y="1" width="15" height="5" fill="#4c8fe0"/>
<rect x="5" y="9" width="11" height="2" fill="#1b3f80"/>
<rect x="1.5" y="8" width="2" height="2" fill="#f0c030"/>
</svg>
</body></html>
